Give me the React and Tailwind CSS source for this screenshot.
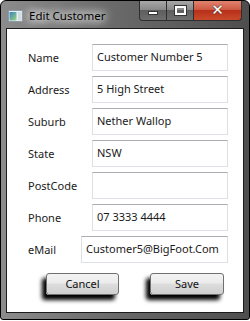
import React from 'react';

const fields = [
  { label: 'Name', value: 'Customer Number 5' },
  { label: 'Address', value: '5 High Street' },
  { label: 'Suburb', value: 'Nether Wallop' },
  { label: 'State', value: 'NSW' },
  { label: 'PostCode', value: '' },
  { label: 'Phone', value: '07 3333 4444' },
];

const AppIcon = () => (
  <svg width="15" height="12" viewBox="0 0 15 12">
    <defs>
      <linearGradient id="ig" x1="0" y1="0" x2="1" y2="1">
        <stop offset="0" stopColor="#3f7fc0" />
        <stop offset="0.6" stopColor="#6fb59a" />
        <stop offset="1" stopColor="#a9d37a" />
      </linearGradient>
    </defs>
    <rect x="0.5" y="0.5" width="14" height="11" fill="#e8eef2" stroke="#8c9aa5" />
    <rect x="1.5" y="2" width="7" height="8.5" fill="url(#ig)" />
    <rect x="10" y="2" width="3.5" height="8.5" fill="#d3dbe2" />
  </svg>
);

const CaptionButtons = () => (
  <div className="flex h-[20px] ml-auto mr-[7px]">
    <div className="w-[28px] h-full flex items-center justify-center border border-t-0 border-[#2e2e2e] rounded-bl-[4px] bg-[linear-gradient(#a8a8a8,#8a8a8a_45%,#5e5e5e_50%,#6e6e6e)]">
      <div className="w-[10px] h-[4px] bg-white border border-[#333] mt-[5px]" />
    </div>
    <div className="w-[27px] h-full flex items-center justify-center border border-t-0 border-l-0 border-[#2e2e2e] bg-[linear-gradient(#a8a8a8,#8a8a8a_45%,#5e5e5e_50%,#6e6e6e)]">
      <div className="w-[11px] h-[9px] border-[2px] border-white outline outline-1 outline-[#333]" />
    </div>
    <div className="w-[48px] h-full flex items-center justify-center border border-t-0 border-l-0 border-[#2e2e2e] rounded-br-[4px] bg-[linear-gradient(#e0836f,#cf5a43_45%,#b8301a_50%,#c94a2a)]">
      <span className="text-white font-black text-[15px] leading-none [text-shadow:0_0_1px_#333,0_0_1px_#333] font-['DejaVu_Sans',sans-serif]">✕</span>
    </div>
  </div>
);

const TextBox = ({ value, className }) => (
  <div className={`h-[27px] bg-white border border-[#dde1e6] border-t-[#abadb3] pl-[4px] pt-[4px] text-[11px] text-[#1a1a1a] leading-[15px] whitespace-nowrap overflow-hidden ${className}`}>
    {value}
  </div>
);

const Button = ({ children, className }) => (
  <div className={`h-[22px] flex items-center justify-center rounded-[3px] border border-[#707070] bg-[linear-gradient(#f3f3f3,#ebebeb_45%,#dddddd_50%,#cfcfcf)] shadow-[-4px_5px_4px_#000] text-[11px] text-[#111] ${className}`}>
    {children}
  </div>
);

export default function App() {
  return (
    <div className="w-[250px] h-[321px] bg-white font-['Segoe_UI','Noto_Sans',sans-serif]">
      <div className="w-[250px] h-[320px] flex flex-col border border-black rounded-t-[6px] rounded-b-[3px] bg-[linear-gradient(90deg,#8c8c8c,#6a6a6a_45%,#4e4e4e)] overflow-hidden">
        <div className="h-[27px] flex items-start">
          <div className="flex items-center pl-[7px] pt-[8px] gap-[6px]">
            <AppIcon />
            <span className="text-[11.5px] leading-[14px] text-black [text-shadow:0_0_8px_#fff,0_0_10px_#fff,0_0_12px_#fff]">Edit Customer</span>
          </div>
          <CaptionButtons />
        </div>
        <div className="flex-1 mx-[5px] mb-[6px] border border-[#1c1c1c] bg-white flex flex-col pt-[15px] pl-[21px] pr-[15px]">
          <div className="flex flex-col gap-[5px]">
            {fields.map((f) => (
              <div key={f.label} className="flex items-center">
                <span className="w-[64px] pt-[2px] text-[11px] text-[#1a1a1a]">{f.label}</span>
                <TextBox value={f.value} className="flex-1" />
              </div>
            ))}
            <div className="flex items-center">
              <span className="w-[53px] pt-[2px] text-[11px] text-[#1a1a1a]">eMail</span>
              <TextBox value="Customer5@BigFoot.Com" className="flex-1" />
            </div>
          </div>
          <div className="flex mt-[10px] pl-[18px]">
            <Button className="w-[73px]">Cancel</Button>
            <Button className="w-[74px] ml-[31px]">Save</Button>
          </div>
        </div>
      </div>
    </div>
  );
}
